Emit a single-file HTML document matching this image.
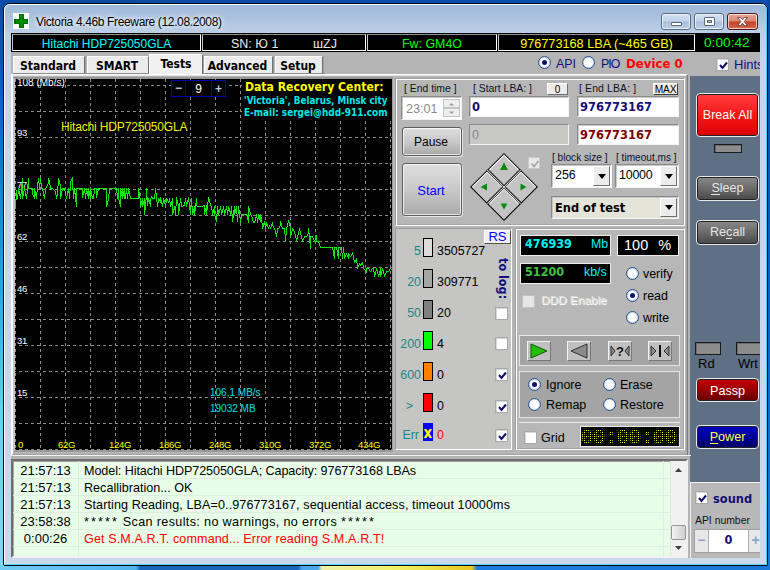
<!DOCTYPE html>
<html><head><meta charset="utf-8"><title>Victoria 4.46b Freeware (12.08.2008)</title>
<style>
*{box-sizing:border-box;margin:0;padding:0}
html,body{width:770px;height:570px;overflow:hidden;background:#0d4ea6}
body{position:relative;font-family:"Liberation Sans","DejaVu Sans",sans-serif;font-size:12px;color:#000}
.a{position:absolute;white-space:nowrap}
.t{position:absolute;white-space:nowrap;line-height:1}
.bd{font-family:"DejaVu Sans Condensed","Liberation Sans","DejaVu Sans",sans-serif;font-weight:bold}
#desk{left:0;top:0;width:770px;height:570px;background:linear-gradient(90deg,rgba(0,0,0,0) 0,rgba(0,0,0,0) 1%,#0a4aa4 1.1%,#0a50b0 100%),linear-gradient(#0c4ca4 0,#0c62c0 100px,#28a0e0 280px,#68d0f0 410px,#80d8f4 100%)}
#deskr{left:768px;top:0;width:2px;height:570px;background:linear-gradient(#0a48a0 0,#0860c8 50%,#1a78d8 100%)}
#frame{left:3px;top:3px;width:765px;height:563px;border:1px solid #05080c;border-radius:7px 7px 2px 2px;background:linear-gradient(#9fb9d9 0,#a9c1de 12px,#bed0e7 30px,#c4d5ea 60px,#c9d9ec 100%)}
#frame i{position:absolute;left:0;top:0;right:0;bottom:0;border:1px solid;border-color:rgba(255,255,255,.9) #48d0ff #58d8ff rgba(255,255,255,.9);border-radius:6px 6px 1px 1px}
#client{left:11px;top:33px;width:749px;height:525px;background:#b4b4b4;overflow:hidden}
.cb{position:absolute;top:13px;height:17px;border:1px solid #5a6a80;border-radius:3px;background:linear-gradient(#d4e1f1 0,#c1d2e8 48%,#a9bfdb 52%,#bccfe6 100%);box-shadow:inset 0 0 0 1px rgba(255,255,255,.65)}
.sb{position:absolute;top:1px;height:17px;border:1px solid;border-color:#909090 #fff #fff #c8c8c8;background:#000}
.tab{position:absolute;top:23px;height:17px;border-bottom:0;background:#ececec;border-top:1px solid #fff;border-left:1px solid #fff;border-right:1px solid #6e6e6e;box-shadow:1px 0 0 #a0a0a0;font-family:"DejaVu Sans Condensed","Liberation Sans","DejaVu Sans",sans-serif;font-weight:bold;font-size:12px;text-align:center;line-height:18px;padding-right:2px}
.rad{position:absolute;width:13px;height:13px;border-radius:50%;background:#fff;border:1px solid #24508c;box-shadow:inset 0 0 0 1px #c9d6e6}
.rad.on:after{content:"";position:absolute;left:3px;top:3px;width:5px;height:5px;border-radius:50%;background:#10106a}
.chk{position:absolute;width:13px;height:13px;background:#fff;border:1px solid #a8a8a8;box-shadow:inset 1px 1px 0 #d8d8d8}
.chk svg{position:absolute;left:1px;top:1px}
.pnl{position:absolute;background:#b7b7b7;border:1px solid;border-color:#9e9e9e #fff #fff #9e9e9e;box-shadow:inset 1px 1px 0 #fff,inset -1px -1px 0 #a2a2a2}
.fld{position:absolute;background:#fff;border:1px solid;border-color:#8a8a8a #f4f4f4 #f4f4f4 #8a8a8a;box-shadow:inset 1px 1px 0 #c8c8c8}
.btn{position:absolute;border:1px solid #5e5e5e;border-radius:3px;background:linear-gradient(#dedede 0,#c9c9c9 50%,#a9a9a9 100%);box-shadow:inset 0 0 0 1px rgba(255,255,255,.7),1px 1px 0 rgba(255,255,255,.6);text-align:center}
.sbt{position:absolute;background:#ececec;border:1px solid;border-color:#fff #6e6e6e #6e6e6e #fff;text-align:center;font-size:11px}
.lbl{position:absolute;white-space:nowrap;font-size:10.4px;color:#10102c;line-height:12px}
.cbx{position:absolute;width:10px;height:19px;border:1px solid #000}
.num{position:absolute;white-space:nowrap;font-size:12.4px;line-height:13px}
.teal{color:#1e8686;text-align:right;width:30px}
.blk{position:absolute;background:#000;border:1px solid #ececec}
.rb{position:absolute;left:685px;width:63px;border:1px solid #e8e8e8;border-radius:4px;box-shadow:inset 0 0 0 1px #222;color:#fff;text-align:center;font-size:14px}
.ind{position:absolute;background:#8c8c8c;border:1px solid #1a1a1a;box-shadow:inset 1px 1px 0 #6a6a6a}
.tb{position:absolute;top:5px;height:20px;width:24px;background:#c0c0c0;border:1px solid;border-color:#f4f4f4 #787878 #787878 #f4f4f4}
.lg{position:absolute;left:0;height:17px;width:657px;border-bottom:1px solid #dcefdc;font-size:12.6px;line-height:18px}
.lg b{position:absolute;left:2px;width:61px;text-align:center;font-weight:normal;font-size:13px}
.lg span{position:absolute;left:71px}
.lg i{font-style:normal;letter-spacing:2.1px}
</style></head><body>
<div class="a" id="desk"></div><div class="a" id="deskr"></div>
<div class="a" style="left:0;top:566px;width:770px;height:4px;background:linear-gradient(90deg,#70ccf2 0,#50b4ee 136px,#1a66bc 140px,#1a66bc 298px,#4aa8e8 302px,#4aa8e8 318px,#f0f0a8 322px,#f0f060 400px,#e8c820 472px,#1a7ce0 477px,#1a78d8 100%)"></div>
<div class="a" id="frame"><i></i></div>
<!-- title bar -->
<div class="a" style="left:13px;top:13px;width:16px;height:16px;background:#fff"></div>
<svg class="a" style="left:13px;top:13px" width="16" height="16"><path d="M6 1h5v5h4v5h-4v4h-5v-4h-5v-5h5z" fill="#007000"/><path d="M7 2h3v5h4v3h-4v4h-3v-4h-4v-3h4z" fill="#008a00"/></svg>
<div class="t" style="left:36px;top:16px;font-size:12px;letter-spacing:-.36px;color:#000;text-shadow:0 0 6px #fff,0 0 4px #fff">Victoria 4.46b Freeware (12.08.2008)</div>
<div class="cb" style="left:661px;width:30px"><span class="a" style="left:9px;top:8px;width:11px;height:4px;background:#fff;border:1px solid #5c6878;border-radius:1px"></span></div>
<div class="cb" style="left:694px;width:30px"><span class="a" style="left:9px;top:3px;width:11px;height:9px;background:#fff;border:1px solid #5c6878;border-radius:1px"></span><span class="a" style="left:12px;top:6px;width:5px;height:3px;background:#b8cbe2;border:1px solid #5c6878"></span></div>
<div class="cb" style="left:727px;width:31px;border-color:#4a1a20;background:linear-gradient(#e9a99a 0,#d98472 48%,#c4432a 52%,#d2694e 100%)"><svg class="a" style="left:8px;top:2px" width="13" height="11"><path d="M1.5 1.5h3l2 2.3 2-2.3h3l-3.4 4 3.4 4h-3l-2-2.3-2 2.3h-3l3.4-4z" fill="#fff" stroke="#5a3030" stroke-width=".8"/></svg></div>
<div class="a" id="client">
<!-- status row -->
<div class="a" style="left:0;top:0;width:749px;height:19px;background:#000"></div>
<div class="sb" style="left:1px;width:189px"></div>
<div class="sb" style="left:191px;width:164px"></div>
<div class="sb" style="left:356px;width:130px"></div>
<div class="sb" style="left:487px;width:197px"></div>
<div class="t" style="left:1px;width:189px;top:5px;text-align:center;font-size:12px;color:#00ffff">Hitachi HDP725050GLA</div>
<div class="t" style="left:191px;width:164px;top:5px;text-align:center;font-size:12.5px;color:#e8e8e8;white-space:pre">SN: Ю 1          шZJ</div>
<div class="t" style="left:356px;width:130px;top:5px;text-align:center;font-size:12.4px;color:#00ff00">Fw: GM4O</div>
<div class="t" style="left:487px;width:197px;top:5px;text-align:center;font-size:12.7px;color:#ffff00">976773168 LBA (~465 GB)</div>
<div class="t" style="left:693px;top:3px;font-size:13.7px;color:#00ff00">0:00:42</div>
<!-- tabs -->
<div class="a" style="left:2px;top:40px;width:312px;height:1px;background:#8c8c8c"></div><div class="a" style="left:0;top:41px;width:677px;height:1px;background:#fff"></div>
<div class="tab" style="left:2px;width:72px">Standard</div>
<div class="tab" style="left:76px;width:62px">SMART</div>
<div class="tab" style="left:193px;width:69px">Advanced</div>
<div class="tab" style="left:264px;width:48px">Setup</div>
<div class="tab" style="left:138px;width:54px;top:21px;height:22px;background:#f0f0f0;line-height:19px;padding-right:0">Tests</div>
<div class="rad on" style="left:527px;top:23px"></div>
<div class="t" style="left:545px;top:24.5px;font-size:12.4px;color:#10107a">API</div>
<div class="rad" style="left:571px;top:23px"></div>
<div class="t" style="left:590px;top:24.5px;font-size:12.4px;color:#10107a;letter-spacing:-1px">PIO</div>
<div class="t bd" style="left:615px;top:24px;font-size:13.1px;color:#ff0000">Device 0</div>
<div class="chk" style="left:705px;top:25px"><svg width="11" height="11"><path d="M2 5l2.5 3L9 2.5" fill="none" stroke="#10106a" stroke-width="2"/></svg></div>
<div class="t" style="left:723px;top:25px;font-size:13px;color:#10107a">Hints</div>
<!-- tab page + graph -->
<div class="a" style="left:0;top:41px;width:677px;height:382px;background:#b5b5b5;border:1px solid;border-color:#fff #7c7c7c #7c7c7c #fff;box-shadow:inset -1px -1px 0 #a4a4a4,inset 0 1px 0 #e4e4e4,inset 1px 0 0 #fff"></div>
<div class="a" style="left:2px;top:44px;width:380px;height:375px;border:2px solid;border-color:#969696 #a0a0a0 #9a9a9a #c4c4c4;background:#000"></div>
<svg class="a" style="left:4px;top:46px" width="377" height="371" viewBox="15 79 377 371" font-family="Liberation Sans, DejaVu Sans, sans-serif">
<rect x="15" y="79" width="377" height="371" fill="#000"/>
<path d="M15.5 79V450 M40.5 79V450 M65.5 79V450 M90.5 79V450 M115.5 79V450 M140.5 79V450 M165.5 79V450 M190.5 79V450 M215.5 79V450 M240.5 79V450 M265.5 79V450 M290.5 79V450 M315.5 79V450 M340.5 79V450 M365.5 79V450 M390.5 79V450" stroke="#8c8c8c" stroke-width="1" stroke-dasharray="3 3" fill="none" shape-rendering="crispEdges"/>
<path d="M15 85.5H392 M15 111.5H392 M15 137.5H392 M15 163.5H392 M15 189.5H392 M15 215.5H392 M15 241.5H392 M15 267.5H392 M15 293.5H392 M15 319.5H392 M15 345.5H392 M15 371.5H392 M15 397.5H392 M15 423.5H392 M15 449.5H392" stroke="#8c8c8c" stroke-width="1" stroke-dasharray="3 3" stroke-dashoffset="2" fill="none" shape-rendering="crispEdges"/>
<path d="M15 200h1v9h-1zM16 190h1v10h-1zM17 194h1v5h-1zM18 188h1v6h-1zM19 191h1v5h-1zM20 194h1v5h-1zM21 184h1v10h-1zM22 178h1v21h-1zM23 191h1v5h-1zM24 188h1v3h-1zM25 191h1v5h-1zM26 194h1v5h-1zM27 184h1v10h-1zM28 178h1v11h-1zM29 188h1v1h-1zM30 188h1v1h-1zM31 188h1v1h-1zM32 188h1v7h-1zM33 195h1v2h-1zM34 188h1v11h-1zM35 191h1v5h-1zM36 192h1v7h-1zM37 182h1v10h-1zM38 178h1v5h-1zM39 183h1v6h-1zM40 178h1v6h-1zM41 183h1v6h-1zM42 188h1v3h-1zM43 191h1v5h-1zM44 194h1v5h-1zM45 188h1v6h-1zM46 186h1v2h-1zM47 184h1v2h-1zM48 178h1v6h-1zM49 180h1v5h-1zM50 185h1v4h-1zM51 188h1v1h-1zM52 188h1v1h-1zM53 189h1v1h-1zM54 190h1v1h-1zM55 191h1v4h-1zM56 195h1v4h-1zM57 186h1v10h-1zM58 178h1v8h-1zM59 180h1v4h-1zM60 184h1v15h-1zM61 191h1v5h-1zM62 188h1v3h-1zM63 188h1v1h-1zM64 188h1v3h-1zM65 191h1v5h-1zM66 196h1v3h-1zM67 191h1v5h-1zM68 188h1v5h-1zM69 191h1v8h-1zM70 181h1v10h-1zM71 179h1v2h-1zM72 177h1v13h-1zM73 190h1v9h-1zM74 188h1v6h-1zM75 193h1v9h-1zM76 188h1v19h-1zM77 188h1v1h-1zM78 188h1v1h-1zM79 188h1v1h-1zM80 188h1v1h-1zM81 188h1v1h-1zM82 188h1v10h-1zM83 191h1v4h-1zM84 188h1v5h-1zM85 193h1v6h-1zM86 188h1v6h-1zM87 191h1v5h-1zM88 188h1v11h-1zM89 191h1v5h-1zM90 188h1v11h-1zM91 191h1v5h-1zM92 196h1v3h-1zM93 194h1v5h-1zM94 188h1v6h-1zM95 188h1v1h-1zM96 188h1v10h-1zM97 191h1v4h-1zM98 188h1v3h-1zM99 188h1v1h-1zM100 188h1v1h-1zM101 188h1v1h-1zM102 188h1v1h-1zM103 188h1v1h-1zM104 188h1v1h-1zM105 188h1v1h-1zM106 188h1v19h-1zM107 201h1v4h-1zM108 194h1v7h-1zM109 188h1v6h-1zM110 188h1v1h-1zM111 188h1v1h-1zM112 188h1v1h-1zM113 188h1v1h-1zM114 188h1v1h-1zM115 188h1v1h-1zM116 188h1v5h-1zM117 193h1v6h-1zM118 188h1v12h-1zM119 200h1v4h-1zM120 188h1v19h-1zM121 191h1v5h-1zM122 188h1v11h-1zM123 191h1v5h-1zM124 188h1v11h-1zM125 193h1v6h-1zM126 188h1v6h-1zM127 193h1v6h-1zM128 188h1v6h-1zM129 191h1v5h-1zM130 196h1v3h-1zM131 198h1v1h-1zM132 198h1v1h-1zM133 198h1v1h-1zM134 198h1v1h-1zM135 198h1v1h-1zM136 198h1v1h-1zM137 198h1v1h-1zM138 188h1v11h-1zM139 192h1v6h-1zM140 198h1v9h-1zM141 201h1v4h-1zM142 198h1v9h-1zM143 201h1v4h-1zM144 198h1v17h-1zM145 200h1v10h-1zM146 188h1v12h-1zM147 197h1v9h-1zM148 198h1v4h-1zM149 200h1v4h-1zM150 198h1v9h-1zM151 196h1v2h-1zM152 197h1v2h-1zM153 198h1v1h-1zM154 194h1v5h-1zM155 188h1v6h-1zM156 193h1v9h-1zM157 202h1v5h-1zM158 198h1v5h-1zM159 199h1v2h-1zM160 197h1v6h-1zM161 200h1v4h-1zM162 203h1v4h-1zM163 198h1v5h-1zM164 200h1v4h-1zM165 203h1v4h-1zM166 198h1v5h-1zM167 199h1v2h-1zM168 201h1v2h-1zM169 198h1v4h-1zM170 202h1v5h-1zM171 201h1v4h-1zM172 198h1v17h-1zM173 209h1v4h-1zM174 206h1v4h-1zM175 206h1v9h-1zM176 197h1v9h-1zM177 200h1v4h-1zM178 204h1v11h-1zM179 203h1v8h-1zM180 198h1v5h-1zM181 202h1v5h-1zM182 206h1v1h-1zM183 205h1v1h-1zM184 202h1v4h-1zM185 198h1v4h-1zM186 202h1v5h-1zM187 200h1v4h-1zM188 197h1v5h-1zM189 202h1v8h-1zM190 207h1v8h-1zM191 198h1v9h-1zM192 206h1v9h-1zM193 209h1v4h-1zM194 206h1v9h-1zM195 203h1v8h-1zM196 198h1v8h-1zM197 206h1v1h-1zM198 206h1v1h-1zM199 206h1v1h-1zM200 206h1v1h-1zM201 206h1v1h-1zM202 206h1v1h-1zM203 205h1v1h-1zM204 205h1v10h-1zM205 208h1v4h-1zM206 205h1v10h-1zM207 202h1v8h-1zM208 197h1v5h-1zM209 199h1v4h-1zM210 203h1v3h-1zM211 206h1v4h-1zM212 210h1v5h-1zM213 209h1v4h-1zM214 206h1v10h-1zM215 216h1v4h-1zM216 214h1v8h-1zM217 206h1v8h-1zM218 210h1v5h-1zM219 209h1v4h-1zM220 206h1v4h-1zM221 210h1v5h-1zM222 209h1v4h-1zM223 206h1v4h-1zM224 210h1v5h-1zM225 209h1v4h-1zM226 206h1v4h-1zM227 210h1v5h-1zM228 206h1v5h-1zM229 208h1v4h-1zM230 211h1v4h-1zM231 206h1v8h-1zM232 214h1v8h-1zM233 210h1v8h-1zM234 206h1v9h-1zM235 209h1v4h-1zM236 206h1v8h-1zM237 214h1v8h-1zM238 206h1v8h-1zM239 210h1v8h-1zM240 218h1v5h-1zM241 214h1v5h-1zM242 214h1v1h-1zM243 214h1v1h-1zM244 214h1v1h-1zM245 214h1v1h-1zM246 214h1v2h-1zM247 216h1v4h-1zM248 206h1v17h-1zM249 208h1v4h-1zM250 212h1v3h-1zM251 215h1v2h-1zM252 217h1v4h-1zM253 221h1v2h-1zM254 221h1v2h-1zM255 217h1v4h-1zM256 214h1v4h-1zM257 218h1v5h-1zM258 214h1v5h-1zM259 216h1v4h-1zM260 214h1v8h-1zM261 217h1v6h-1zM262 223h1v6h-1zM263 223h1v4h-1zM264 221h1v4h-1zM265 225h1v4h-1zM266 222h1v4h-1zM267 224h1v3h-1zM268 227h1v2h-1zM269 225h1v2h-1zM270 227h1v2h-1zM271 224h1v3h-1zM272 222h1v4h-1zM273 226h1v2h-1zM274 228h1v2h-1zM275 230h1v4h-1zM276 233h1v4h-1zM277 228h1v5h-1zM278 228h1v1h-1zM279 226h1v2h-1zM280 221h1v5h-1zM281 223h1v4h-1zM282 227h1v2h-1zM283 228h1v1h-1zM284 228h1v6h-1zM285 234h1v7h-1zM286 227h1v8h-1zM287 223h1v4h-1zM288 220h1v3h-1zM289 222h1v4h-1zM290 226h1v11h-1zM291 231h1v4h-1zM292 228h1v3h-1zM293 229h1v2h-1zM294 231h1v3h-1zM295 234h1v4h-1zM296 238h1v3h-1zM297 235h1v4h-1zM298 231h1v4h-1zM299 228h1v3h-1zM300 231h1v4h-1zM301 235h1v4h-1zM302 239h1v3h-1zM303 238h1v2h-1zM304 236h1v2h-1zM305 236h1v1h-1zM306 236h1v1h-1zM307 234h1v2h-1zM308 228h1v6h-1zM309 233h1v10h-1zM310 236h1v13h-1zM311 236h1v1h-1zM312 236h1v2h-1zM313 238h1v2h-1zM314 240h1v2h-1zM315 237h1v3h-1zM316 235h1v7h-1zM317 241h1v1h-1zM318 241h1v2h-1zM319 243h1v3h-1zM320 246h1v2h-1zM321 247h1v1h-1zM322 247h1v1h-1zM323 247h1v1h-1zM324 247h1v1h-1zM325 247h1v1h-1zM326 247h1v1h-1zM327 247h1v1h-1zM328 247h1v1h-1zM329 247h1v1h-1zM330 247h1v1h-1zM331 247h1v1h-1zM332 247h1v3h-1zM333 250h1v6h-1zM334 247h1v12h-1zM335 247h1v1h-1zM336 247h1v3h-1zM337 250h1v6h-1zM338 247h1v12h-1zM339 247h1v1h-1zM340 247h1v1h-1zM341 247h1v6h-1zM342 253h1v6h-1zM343 247h1v6h-1zM344 253h1v6h-1zM345 255h1v2h-1zM346 253h1v2h-1zM347 255h1v2h-1zM348 253h1v6h-1zM349 254h1v2h-1zM350 256h1v1h-1zM351 254h1v2h-1zM352 252h1v3h-1zM353 255h1v5h-1zM354 260h1v3h-1zM355 260h1v2h-1zM356 258h1v5h-1zM357 263h1v6h-1zM358 265h1v2h-1zM359 263h1v2h-1zM360 264h1v2h-1zM361 263h1v2h-1zM362 262h1v3h-1zM363 265h1v4h-1zM364 269h1v1h-1zM365 270h1v2h-1zM366 268h1v5h-1zM367 268h1v1h-1zM368 268h1v1h-1zM369 269h1v2h-1zM370 271h1v1h-1zM371 269h1v2h-1zM372 268h1v1h-1zM373 268h1v4h-1zM374 272h1v5h-1zM375 271h1v4h-1zM376 268h1v3h-1zM377 270h1v4h-1zM378 274h1v3h-1zM379 271h1v4h-1zM380 268h1v9h-1zM381 271h1v4h-1zM382 268h1v3h-1zM383 270h1v4h-1zM384 274h1v3h-1zM385 273h1v2h-1zM386 271h1v2h-1zM387 271h1v1h-1zM388 271h1v1h-1zM389 269h1v2h-1zM390 268h1v1h-1zM391 269h1v1h-1zM392 270h1v1h-1z" fill="#14e614" shape-rendering="crispEdges"/>
<g font-size="9.500" fill="#fff" letter-spacing="-.2"><text x="17" y="86" font-size="10" letter-spacing="0">108 (Mb/s)</text><text x="17" y="136">93</text><text x="17" y="188">77</text><text x="17" y="240">62</text><text x="17" y="292">46</text><text x="17" y="344">31</text><text x="17" y="396">15</text></g>
<g font-size="9.500" fill="#ffff00" letter-spacing="-.25"><text x="18" y="448">0</text><text x="58" y="448">62G</text><text x="109" y="448">124G</text><text x="159" y="448">186G</text><text x="209" y="448">248G</text><text x="259" y="448">310G</text><text x="309" y="448">372G</text><text x="358" y="448">434G</text></g>
<text x="61" y="131" font-size="12" fill="#f0f000" letter-spacing="-.15">Hitachi HDP725050GLA</text>
<rect x="242" y="79" width="150" height="40" fill="#000"/>
<text x="245" y="90.500" font-size="12.100" font-weight="bold" font-family="DejaVu Sans Condensed, Liberation Sans, DejaVu Sans, sans-serif" fill="#ffff00">Data Recovery Center:</text>
<text x="244" y="104" font-size="10" font-weight="bold" font-family="DejaVu Sans Condensed, Liberation Sans, DejaVu Sans, sans-serif" fill="#00e8e8" textLength="143.500" lengthAdjust="spacingAndGlyphs">'Victoria', Belarus, Minsk city</text>
<text x="244" y="115.500" font-size="10" font-weight="bold" font-family="DejaVu Sans Condensed, Liberation Sans, DejaVu Sans, sans-serif" fill="#00e8e8" textLength="143.500" lengthAdjust="spacingAndGlyphs">E-mail: sergei@hdd-911.com</text>
<text x="210" y="396" font-size="10" fill="#00e0e0">106,1 MB/s</text>
<text x="210" y="412" font-size="10" fill="#00e0e0">19032 MB</text>
<rect x="171.500" y="80.500" width="54" height="16" fill="#000" stroke="#0000b0"/>
<path d="M185.500 80V97M211.500 80V97" stroke="#0000b0"/>
<text x="178.500" y="92" font-size="12" font-weight="bold" fill="#b8c8e0" text-anchor="middle">−</text>
<text x="198.500" y="92.500" font-size="12" fill="#fff" text-anchor="middle">9</text>
<text x="218.500" y="92.500" font-size="12" font-weight="bold" fill="#b8c8e0" text-anchor="middle">+</text>
</svg>
<!-- top middle panel -->
<div class="pnl" style="left:384px;top:45px;width:290px;height:148px"></div>
<div class="lbl" style="left:393px;top:50px">[ End time ]</div>
<div class="lbl" style="left:462px;top:50px">[ Start LBA: ]</div>
<div class="lbl" style="left:568px;top:50px;letter-spacing:.15px">[ End LBA: ]</div>
<div class="sbt" style="left:536px;top:50px;width:21px;height:12px;line-height:11px;font-size:10px">0</div>
<div class="sbt" style="left:642px;top:50px;width:25px;height:12px;line-height:11px;font-size:10.2px;letter-spacing:-.2px;border-color:#fff #3a3a3a #3a3a3a #fff">MAX</div>
<div class="fld" style="left:390px;top:63px;width:61px;height:24px"><span class="t" style="left:4px;top:6px;font-size:12.6px;color:#8c8c8c">23:01</span>
<span class="a" style="left:41px;top:2px;width:17px;height:9px;background:#eee;border:1px solid #c4c4c4"></span><span class="a" style="left:41px;top:11px;width:17px;height:9px;background:#eee;border:1px solid #c4c4c4"></span>
<svg class="a" style="left:46px;top:5px" width="7" height="13"><path d="M1 3.500L3.500 1 6 3.500zM1 9.500L3.500 12 6 9.500z" fill="#9a9a9a"/></svg></div>
<div class="fld" style="left:458px;top:63px;width:100px;height:21px"><span class="t" style="left:2px;top:3.5px;font-size:12.8px;font-family:'DejaVu Sans Condensed','Liberation Sans','DejaVu Sans',sans-serif;font-weight:bold;color:#10107a">0</span></div>
<div class="fld" style="left:566px;top:63px;width:102px;height:21px"><span class="t" style="left:2px;top:3.5px;font-size:12.8px;font-family:'DejaVu Sans Condensed','Liberation Sans','DejaVu Sans',sans-serif;font-weight:bold;color:#10107a">976773167</span></div>
<div class="fld" style="left:458px;top:91px;width:100px;height:21px;background:#c8c8c4"><span class="t" style="left:2px;top:3.5px;font-size:12.6px;color:#8a8a8a">0</span></div>
<div class="fld" style="left:566px;top:91px;width:102px;height:21px"><span class="t" style="left:2px;top:3.5px;font-size:12.8px;font-family:'DejaVu Sans Condensed','Liberation Sans','DejaVu Sans',sans-serif;font-weight:bold;color:#800000">976773167</span></div>
<div class="btn" style="left:391px;top:94px;width:60px;height:29px;font-size:12px;line-height:29px;padding-right:2px">Pause</div>
<div class="btn" style="left:391px;top:130px;width:60px;height:53px;font-size:13px;line-height:54px;padding-right:2px;color:#0000ff">Start</div>
<svg class="a" style="left:458px;top:119px" width="70" height="70" viewBox="-35 -35 70 70">
<g transform="rotate(45)"><rect x="-23.500" y="-23.500" width="47" height="47" fill="#c4c4c4" stroke="#000" stroke-width="1"/>
<path d="M0 -23.500V23.500M-23.500 0H23.500" stroke="#000" stroke-width="3"/><path d="M0 -23.500V23.500M-23.500 0H23.500" stroke="#d8d8d8" stroke-width="1"/>
<path d="M-22.500 -1.500V-22.500H-1.500M1.500 -1.500V-22.500M1.500 -22.500H22.500M-22.500 22.500V1.500H-1.500M1.500 22.500V1.500H22.500" stroke="#f4f4f4" stroke-width="1" fill="none"/></g>
<path d="M0 -24.500L-4 -17H4zM0 22.500L-3.500 16.500H3.500zM-23.500 0L-17 -3.500V3.500zM22.500 0L16.500 -3.500V3.500z" fill="#0a8a0a"/>
</svg>
<div class="chk" style="left:517px;top:124px;width:12px;height:12px;background:#e8e8e8;border-color:#c8c8c8;box-shadow:none"><svg width="10" height="10"><path d="M1.500 4.500l2.500 3L8.500 2" fill="none" stroke="#a8a8a8" stroke-width="1.800"/></svg></div>
<div class="lbl" style="left:541px;top:119px;font-size:10.1px">[ block size ]</div>
<div class="lbl" style="left:605px;top:119px;font-size:10.1px">[ timeout,ms ]</div>
<div class="fld" style="left:540px;top:131px;width:61px;height:24px"><span class="t" style="left:3px;top:4px;font-size:12.4px">256</span><span class="sbt" style="left:41px;top:1px;width:17px;height:20px"></span><svg class="a" style="left:46px;top:9px" width="8" height="5"><path d="M0 0h8l-4 5z" fill="#000"/></svg></div>
<div class="fld" style="left:604px;top:131px;width:64px;height:24px"><span class="t" style="left:3px;top:4px;font-size:12.4px;letter-spacing:-.2px">10000</span><span class="sbt" style="left:44px;top:1px;width:17px;height:20px"></span><svg class="a" style="left:49px;top:9px" width="8" height="5"><path d="M0 0h8l-4 5z" fill="#000"/></svg></div>
<div class="fld" style="left:540px;top:163px;width:128px;height:23px;background:#e4e4d8"><span class="t" style="left:3px;top:5px;font-size:12.7px;font-family:'DejaVu Sans Condensed','Liberation Sans','DejaVu Sans',sans-serif;font-weight:bold">End of test</span><span class="sbt" style="left:108px;top:1px;width:17px;height:19px"></span><svg class="a" style="left:113px;top:8px" width="8" height="5"><path d="M0 0h8l-4 5z" fill="#000"/></svg></div>
<!-- legend panel -->
<div class="pnl" style="left:384px;top:195px;width:117px;height:222px;background:#c5c5c3;border-color:#9a9a9a #fff #fff #9a9a9a;box-shadow:none"></div>
<div class="sbt" style="left:473px;top:197px;width:27px;height:14px;font-size:13px;line-height:12px;color:#0000ff;background:#f0f0f0;border-color:#fff #505050 #505050 #fff">RS</div>
<div class="num teal" style="left:380px;top:212px">5</div><div class="cbx" style="left:412px;top:205px;background:#dcdcdc"></div><div class="num" style="left:426px;top:212px">3505727</div>
<div class="num teal" style="left:380px;top:243px">20</div><div class="cbx" style="left:412px;top:236px;background:#a6a6a6"></div><div class="num" style="left:426px;top:243px">309771</div>
<div class="num teal" style="left:380px;top:274px">50</div><div class="cbx" style="left:412px;top:267px;background:#808080"></div><div class="num" style="left:426px;top:274px">20</div>
<div class="num teal" style="left:380px;top:305px">200</div><div class="cbx" style="left:412px;top:298px;background:#00ff00"></div><div class="num" style="left:426px;top:305px">4</div>
<div class="num teal" style="left:380px;top:336px">600</div><div class="cbx" style="left:412px;top:329px;background:#ff8000"></div><div class="num" style="left:426px;top:336px">0</div>
<div class="num teal" style="left:372px;top:367px">&gt;</div><div class="cbx" style="left:412px;top:360px;background:#ff0000"></div><div class="num" style="left:426px;top:367px">0</div>
<div class="num teal" style="left:378px;top:396px">Err</div><div class="cbx" style="left:412px;top:390px;width:10px;height:18px;border:0;background:#0000ff"></div><div class="t" style="left:412.5px;top:393px;font-size:15px;font-family:'DejaVu Sans Condensed','Liberation Sans','DejaVu Sans',sans-serif;font-weight:bold;color:#ffff00">x</div><div class="num" style="left:426px;top:396px;color:#ff0000">0</div>
<div class="t" style="left:470.5px;top:239px;width:41px;height:13px;font-size:12.5px;font-family:'DejaVu Sans Condensed','Liberation Sans','DejaVu Sans',sans-serif;font-weight:bold;color:#10107a;transform:rotate(90deg);transform-origin:center">to log:</div>
<div class="chk" style="left:484px;top:274px"></div>
<div class="chk" style="left:484px;top:304px"></div>
<div class="chk" style="left:484px;top:335px"><svg width="11" height="11"><path d="M2 5l2.500 3L9 2.500" fill="none" stroke="#10106a" stroke-width="2"/></svg></div>
<div class="chk" style="left:484px;top:367px"><svg width="11" height="11"><path d="M2 5l2.500 3L9 2.500" fill="none" stroke="#10106a" stroke-width="2"/></svg></div>
<div class="chk" style="left:484px;top:396px"><svg width="11" height="11"><path d="M2 5l2.500 3L9 2.500" fill="none" stroke="#10106a" stroke-width="2"/></svg></div>
<!-- right middle panel -->
<div class="pnl" style="left:504px;top:195px;width:170px;height:222px"></div>
<div class="blk" style="left:509px;top:202px;width:91px;height:21px"></div>
<div class="blk" style="left:606px;top:202px;width:62px;height:21px"></div>
<div class="blk" style="left:509px;top:230px;width:91px;height:21px"></div>
<div class="t" style="left:514px;top:205px;font-size:12.5px;font-family:'DejaVu Sans Condensed','Liberation Sans','DejaVu Sans',sans-serif;font-weight:bold;color:#00f0f0">476939</div>
<div class="t" style="left:580px;top:205px;font-size:12.4px;color:#00f0f0">Mb</div>
<div class="t" style="left:613px;top:205px;font-size:14.5px;color:#fff;white-space:pre;word-spacing:1px">100  %</div>
<div class="t" style="left:514px;top:233px;font-size:12.5px;font-family:'DejaVu Sans Condensed','Liberation Sans','DejaVu Sans',sans-serif;font-weight:bold;color:#40c040">51200</div>
<div class="t" style="left:573px;top:233px;font-size:12.4px;color:#00f0f0">kb/s</div>
<div class="rad" style="left:615px;top:234px"></div><div class="t" style="left:632px;top:235px;font-size:12.4px">verify</div>
<div class="rad on" style="left:615px;top:256px"></div><div class="t" style="left:632px;top:257px;font-size:12.4px">read</div>
<div class="rad" style="left:615px;top:278px"></div><div class="t" style="left:632px;top:279px;font-size:12.4px">write</div>
<div class="chk" style="left:511px;top:262px;background:#e6e6e6;border-color:#c4c4c4;box-shadow:none"></div>
<div class="t" style="left:530px;top:262px;font-size:11.8px;color:#dedede;text-shadow:1px 1px 0 #fff">DDD Enable</div>
<div class="a" style="left:508px;top:302px;width:161px;height:31px;background:#a4a4a4;border:1px solid #e4e4e4"></div>
<div class="tb" style="left:516px;top:308px"><svg width="22" height="18"><path d="M3 2L19 9L3 16z" fill="#22c000" stroke="#0a5a0a" stroke-width="1"/></svg></div>
<div class="tb" style="left:556px;top:308px"><svg width="22" height="18"><path d="M19 2L3 9L19 16z" fill="#8c8c8c" stroke="#303030" stroke-width="1"/></svg></div>
<div class="tb" style="left:597px;top:308px"><svg width="22" height="18"><path d="M2 4L6 9L2 14z" fill="#8c8c8c" stroke="#303030"/><path d="M20 4L16 9L20 14z" fill="#8c8c8c" stroke="#303030"/><text x="11" y="14" font-size="13" font-weight="bold" text-anchor="middle" font-family="Liberation Sans, sans-serif" fill="#101010">?</text></svg></div>
<div class="tb" style="left:637px;top:308px"><svg width="22" height="18"><path d="M2 4L7 9L2 14z" fill="#8c8c8c" stroke="#303030"/><path d="M20 4L15 9L20 14z" fill="#8c8c8c" stroke="#303030"/><path d="M11 3V15" stroke="#101010" stroke-width="2"/></svg></div>
<div class="a" style="left:508px;top:338px;width:161px;height:47px;background:#a4a4a4;border:1px solid #e4e4e4"></div>
<div class="rad on" style="left:517px;top:345px"></div><div class="t" style="left:535px;top:346px;font-size:12.5px">Ignore</div>
<div class="rad" style="left:592px;top:345px"></div><div class="t" style="left:609px;top:346px;font-size:12.5px">Erase</div>
<div class="rad" style="left:517px;top:365px"></div><div class="t" style="left:535px;top:366px;font-size:12.5px">Remap</div>
<div class="rad" style="left:592px;top:365px"></div><div class="t" style="left:609px;top:366px;font-size:12.5px">Restore</div>
<div class="a" style="left:508px;top:389px;width:161px;height:1px;background:#ececec"></div>
<div class="chk" style="left:513px;top:398px"></div><div class="t" style="left:530px;top:399px;font-size:12.5px">Grid</div>
<div class="blk" style="left:569px;top:393px;width:100px;height:21px;overflow:hidden;background:#061c06"><span class="t" style="left:0;top:-1px;font:20px 'Liberation Mono','DejaVu Sans Mono',monospace;color:#ffff00;text-shadow:0 0 1px #ffff00,0 0 1px #ffff00">00:00:00</span>
<span class="a" style="left:0;top:0;width:100px;height:21px;background:repeating-linear-gradient(0deg,#000 0,#000 1px,transparent 1px,transparent 2px),repeating-linear-gradient(90deg,#000 0,#000 1px,transparent 1px,transparent 2px)"></span></div>
<!-- right dark panel -->
<div class="a" style="left:679px;top:43px;width:70px;height:406px;background:#5f6f84"></div>
<div class="rb" style="top:60px;height:44px;line-height:42px;font-size:12.5px;background:linear-gradient(#ff4040 0,#f41818 50%,#dc0000 100%)">Break All</div>
<div class="ind" style="left:703px;top:111px;width:28px;height:9px"></div>
<div class="rb" style="top:143px;height:25px;line-height:23px;font-size:12.6px;background:linear-gradient(#8a8a8a 0,#6a6a6a 50%,#484848 100%);color:#e4e4e4">Sleep</div>
<div class="rb" style="top:187px;height:25px;line-height:23px;font-size:12.6px;background:linear-gradient(#8a8a8a 0,#6a6a6a 50%,#484848 100%);color:#e4e4e4">Recall</div>
<div class="ind" style="left:684px;top:309px;width:26px;height:13px"></div>
<div class="ind" style="left:725px;top:309px;width:26px;height:13px"></div>
<div class="t" style="left:687px;top:324px;font-size:13px;color:#000">Rd</div>
<div class="t" style="left:727px;top:324px;font-size:13px;color:#000">Wrt</div>
<div class="rb" style="top:345px;height:24px;line-height:24px;font-size:12.6px;background:linear-gradient(#c80000 0,#980000 50%,#640000 100%)">Passp</div>
<div class="rb" style="top:392px;height:24px;line-height:22px;font-size:12.6px;background:linear-gradient(#0000c8 0,#000098 50%,#000064 100%);color:#ffff40">Power</div>
<div class="a" style="left:700.4px;top:161px;width:8.4px;height:1px;background:#e4e4e4"></div>
<div class="a" style="left:715.1px;top:205px;width:6.3px;height:1px;background:#e4e4e4"></div>
<div class="a" style="left:698.6px;top:410px;width:8.4px;height:1px;background:#ffff40"></div>
<!-- sound panel -->
<div class="a" style="left:679px;top:449px;width:70px;height:76px;background:#b8b8b8;border-top:1px solid #f0f0f0;border-left:1px solid #f0f0f0"></div>
<div class="chk" style="left:684px;top:458px"><svg width="11" height="11"><path d="M2 5l2.500 3L9 2.500" fill="none" stroke="#10106a" stroke-width="2"/></svg></div>
<div class="t" style="left:702px;top:460px;font-size:12.7px;font-family:'DejaVu Sans Condensed','Liberation Sans','DejaVu Sans',sans-serif;font-weight:bold;color:#10107a">sound</div>
<div class="t" style="left:684px;top:483px;font-size:10.4px;color:#101020">API number</div>
<div class="a" style="left:683px;top:496px;width:70px;height:24px;background:#fff;border:1px solid #a0a0a0"></div>
<div class="a" style="left:684px;top:497px;width:14px;height:22px;background:#e8e8e8;border-right:1px solid #b0b0b0;color:#8aa4c8;font-weight:bold;font-size:14px;line-height:20px;text-align:center">−</div>
<div class="a" style="left:737px;top:497px;width:14px;height:22px;background:#e8e8e8;border-left:1px solid #b0b0b0;color:#8aa4c8;font-weight:bold;font-size:14px;line-height:20px;text-align:center">+</div>
<div class="t" style="left:698px;top:501px;width:39px;text-align:center;font-size:12.6px;font-family:'DejaVu Sans Condensed','Liberation Sans','DejaVu Sans',sans-serif;font-weight:bold;color:#10107a">0</div>
<!-- log -->
<div class="a" style="left:0;top:422px;width:680px;height:1px;background:#f4f4f4"></div>
<div class="a" style="left:0;top:426px;width:677px;height:99px;background:#e8fde8;border:2px solid;border-color:#6e6e6e #f0f0f0 #f0f0f0 #6e6e6e;box-shadow:inset 1px 1px 0 #a0a0a0;overflow:hidden">
<div class="a" style="left:65px;top:0;width:1px;height:95px;background:#dcefdc"></div>
<div class="lg" style="top:1px"><b>21:57:13</b><span style="letter-spacing:-.09px">Model: Hitachi HDP725050GLA; Capacity: 976773168 LBAs</span></div>
<div class="lg" style="top:18px"><b>21:57:13</b><span>Recallibration... OK</span></div>
<div class="lg" style="top:35px"><b>21:57:13</b><span style="letter-spacing:.09px">Starting Reading, LBA=0..976773167, sequential access, timeout 10000ms</span></div>
<div class="lg" style="top:52px"><b>23:58:38</b><span style="letter-spacing:.35px"><i>*****</i> Scan results: no warnings, no errors <i>*****</i></span></div>
<div class="lg" style="top:69px"><b>0:00:26</b><span style="color:#ff0000;letter-spacing:.1px">Get S.M.A.R.T. command... Error reading S.M.A.R.T!</span></div>
<div class="a" style="left:650px;top:0;width:1px;height:95px;background:#dcefdc"></div><div class="a" style="left:657px;top:0;width:16px;height:95px;background:#f0f0f0;border-left:1px solid #e4e4e4"></div>
<svg class="a" style="left:662px;top:7px" width="7" height="4"><path d="M0 4L3.500 0 7 4z" fill="#404040"/></svg>
<svg class="a" style="left:662px;top:85px" width="7" height="4"><path d="M0 0L3.500 4 7 0z" fill="#404040"/></svg>
<div class="a" style="left:658px;top:64px;width:15px;height:15px;border:1px solid #979797;border-radius:2px;background:linear-gradient(90deg,#f4f4f4,#e0e0e0 50%,#d0d0d0)"></div>
</div>
</div>
</body></html>
